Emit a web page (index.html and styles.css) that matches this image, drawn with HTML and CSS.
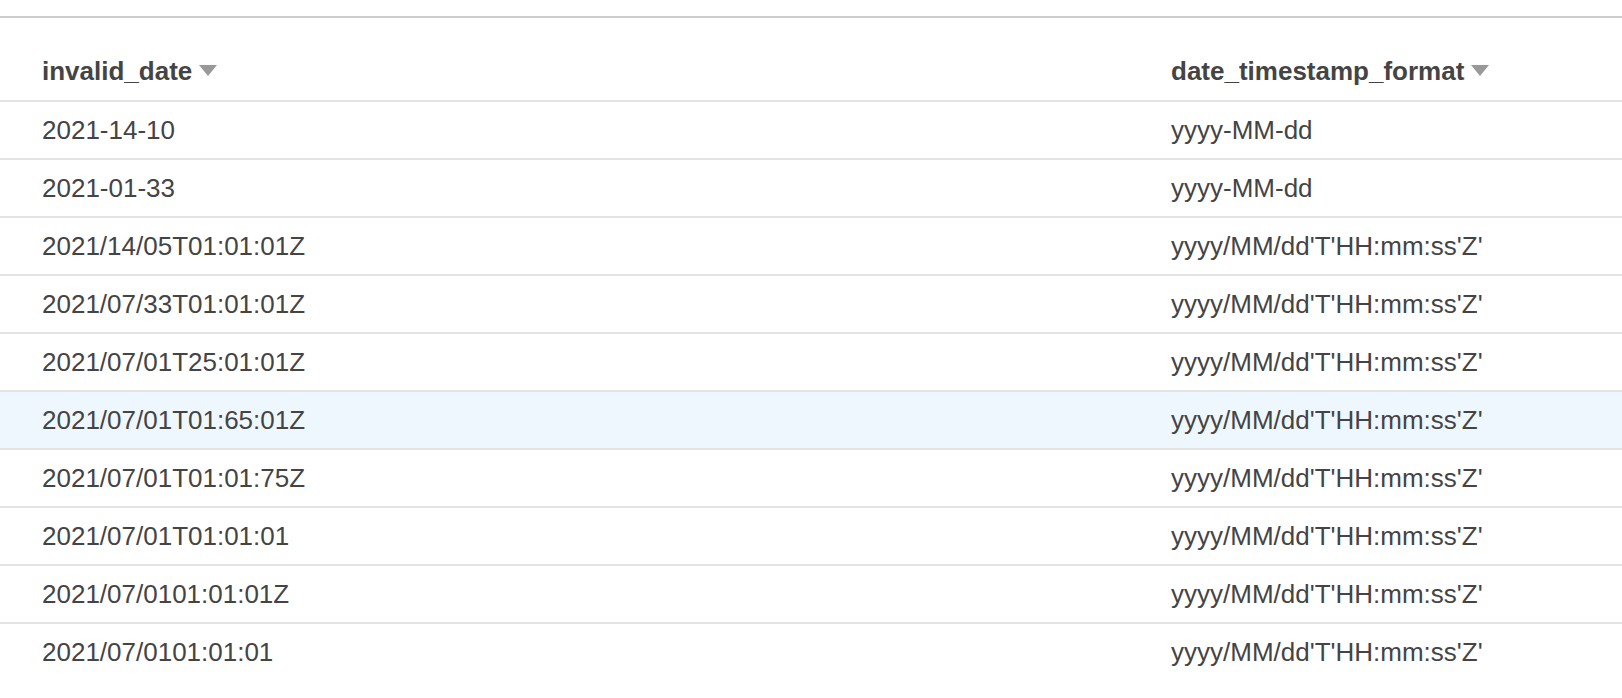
FILE: index.html
```html
<!DOCTYPE html>
<html>
<head>
<meta charset="utf-8">
<link rel="stylesheet" href="styles.css">
</head>
<body>
<div class="page">
  <div class="table">
    <div class="row head">
      <div class="cell"><span class="hlabel">invalid_date</span><span class="caret"></span></div>
      <div class="cell"><span class="hlabel">date_timestamp_format</span><span class="caret"></span></div>
    </div>
    <div class="row"><div class="cell">2021-14-10</div><div class="cell">yyyy-MM-dd</div></div>
    <div class="row"><div class="cell">2021-01-33</div><div class="cell">yyyy-MM-dd</div></div>
    <div class="row"><div class="cell">2021/14/05T01:01:01Z</div><div class="cell">yyyy/MM/dd'T'HH:mm:ss'Z'</div></div>
    <div class="row"><div class="cell">2021/07/33T01:01:01Z</div><div class="cell">yyyy/MM/dd'T'HH:mm:ss'Z'</div></div>
    <div class="row"><div class="cell">2021/07/01T25:01:01Z</div><div class="cell">yyyy/MM/dd'T'HH:mm:ss'Z'</div></div>
    <div class="row hover"><div class="cell">2021/07/01T01:65:01Z</div><div class="cell">yyyy/MM/dd'T'HH:mm:ss'Z'</div></div>
    <div class="row"><div class="cell">2021/07/01T01:01:75Z</div><div class="cell">yyyy/MM/dd'T'HH:mm:ss'Z'</div></div>
    <div class="row"><div class="cell">2021/07/01T01:01:01</div><div class="cell">yyyy/MM/dd'T'HH:mm:ss'Z'</div></div>
    <div class="row"><div class="cell">2021/07/0101:01:01Z</div><div class="cell">yyyy/MM/dd'T'HH:mm:ss'Z'</div></div>
    <div class="row last"><div class="cell">2021/07/0101:01:01</div><div class="cell">yyyy/MM/dd'T'HH:mm:ss'Z'</div></div>
  </div>
</div>
</body>
</html>
```

FILE: styles.css
```css
html, body {
  margin: 0;
  padding: 0;
  background: #ffffff;
}
body {
  font-family: "Liberation Sans", Arial, Helvetica, sans-serif;
  color: #444444;
  font-size: 26px;
}
.page {
  padding-top: 16px;
}
.table {
  border-top: 2px solid #cccccc;
}
.row {
  display: grid;
  grid-template-columns: 1129px 1fr;
  height: 56px;
  border-bottom: 2px solid #e3e3e3;
}
.row.last {
  border-bottom: none;
}
.row.hover {
  background: #eff7fe;
}
.cell {
  display: flex;
  align-items: center;
  padding-left: 42px;
  line-height: 30px;
  white-space: nowrap;
}
.row.head {
  height: 82px;
}
.row.head .cell {
  align-items: flex-end;
  padding-bottom: 14px;
}
.hlabel {
  font-weight: bold;
  color: #444444;
}
.caret {
  display: inline-block;
  width: 0;
  height: 0;
  border-left: 9px solid transparent;
  border-right: 9px solid transparent;
  border-top: 11px solid #999999;
  margin-left: 7px;
  margin-bottom: 10px;
}
```
